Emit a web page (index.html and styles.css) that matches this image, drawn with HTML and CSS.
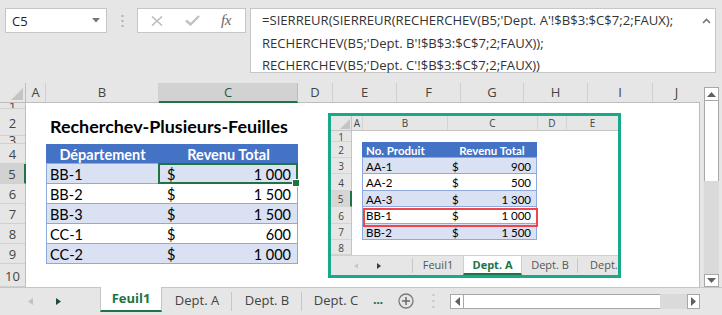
FILE: index.html
```html
<!DOCTYPE html>
<html lang="fr">
<head>
<meta charset="utf-8">
<title>Recherchev-Plusieurs-Feuilles</title>
<link rel="stylesheet" href="styles.css">
</head>
<body>
<div class="app">
  <div class="toolbar">
    <div class="namebox"><span>C5</span><svg width="8" height="5" viewBox="0 0 8 5"><path d="M0 0h8L4 4.5z" fill="#777"/></svg></div>
    <div class="vdots"><svg width="3" height="12" viewBox="0 0 3 12"><rect x="0.5" y="0" width="2" height="2" fill="#b0b0b0"/><rect x="0.5" y="5" width="2" height="2" fill="#b0b0b0"/><rect x="0.5" y="10" width="2" height="2" fill="#b0b0b0"/></svg></div>
    <div class="fxbox">
      <svg class="ic-x" width="12" height="10" viewBox="0 0 12 10"><path d="M1 0.5l10 9M11 0.5l-10 9" stroke="#bdbdbd" stroke-width="1.6"/></svg>
      <svg class="ic-ok" width="15" height="11" viewBox="0 0 15 11"><path d="M1 5.5l4.5 4L14 1" stroke="#c2c2c2" stroke-width="2.4" fill="none"/></svg>
      <span class="fx">fx</span>
    </div>
    <div class="formula">
      <div class="ftext">=SIERREUR(SIERREUR(RECHERCHEV(B5;'Dept. A'!$B$3:$C$7;2;FAUX);<br>RECHERCHEV(B5;'Dept. B'!$B$3:$C$7;2;FAUX));<br>RECHERCHEV(B5;'Dept. C'!$B$3:$C$7;2;FAUX))</div>
      <svg class="fcaret" width="9" height="6" viewBox="0 0 9 6"><path d="M1 5l3.5-3.5L8 5" stroke="#777" stroke-width="1.6" fill="none"/></svg>
    </div>
  </div>

  <div class="main">
    <div class="sheet">
      <div class="corner"><svg width="26" height="20" viewBox="0 0 26 20"><path d="M23 5v12H11z" fill="#c4c4c4"/></svg></div>
      <div class="colhdrs">
        <div class="ch">A</div><div class="ch">B</div><div class="ch sel">C</div><div class="ch">D</div><div class="ch">E</div><div class="ch">F</div><div class="ch">G</div><div class="ch">H</div><div class="ch">I</div><div class="ch last">J</div>
      </div>
      <div class="rowhdrs">
        <div class="rh">1</div><div class="rh">2</div><div class="rh">3</div><div class="rh">4</div><div class="rh sel">5</div><div class="rh">6</div><div class="rh">7</div><div class="rh">8</div><div class="rh">9</div><div class="rh">10</div>
      </div>
      <div class="cells">
        <div class="title">Recherchev-Plusieurs-Feuilles</div>
        <div class="tbl">
          <div class="th">Département</div><div class="th">Revenu Total</div>
          <div class="tb b1">BB-1</div><div class="tc b1 active"><span>$</span><span>1 000</span></div>
          <div class="tb">BB-2</div><div class="tc"><span>$</span><span>1 500</span></div>
          <div class="tb b1">BB-3</div><div class="tc b1"><span>$</span><span>1 500</span></div>
          <div class="tb">CC-1</div><div class="tc"><span>$</span><span>600</span></div>
          <div class="tb b1">CC-2</div><div class="tc b1"><span>$</span><span>1 000</span></div>
        </div>

        <div class="mini">
          <div class="mcorner"><svg width="21" height="15" viewBox="0 0 21 15"><path d="M19 3v10H9z" fill="#c4c4c4"/></svg></div>
          <div class="mcols">
            <div class="mch">A</div><div class="mch">B</div><div class="mch">C</div><div class="mch">D</div><div class="mch last">E</div>
          </div>
          <div class="mrows">
            <div class="mrh">1</div><div class="mrh">2</div><div class="mrh">3</div><div class="mrh">4</div><div class="mrh sel">5</div><div class="mrh">6</div><div class="mrh">7</div><div class="mrh">8</div>
          </div>
          <div class="mcells">
            <div class="mtbl">
              <div class="mth left">No. Produit</div><div class="mth">Revenu Total</div>
              <div class="mtb b1">AA-1</div><div class="mtc b1"><span>$</span><span>900</span></div>
              <div class="mtb">AA-2</div><div class="mtc"><span>$</span><span>500</span></div>
              <div class="mtb b1">AA-3</div><div class="mtc b1"><span>$</span><span>1 300</span></div>
              <div class="mtb">BB-1</div><div class="mtc"><span>$</span><span>1 000</span></div>
              <div class="mtb b1">BB-2</div><div class="mtc b1"><span>$</span><span>1 500</span></div>
            </div>
            <div class="redbox"></div>
          </div>
          <div class="mtabs">
            <div class="mnav"><svg width="4" height="6" viewBox="0 0 4 6"><path d="M4 0v6L0 3z" fill="#c8c8c8"/></svg><svg width="4" height="6" viewBox="0 0 4 6"><path d="M0 0v6l4-3z" fill="#3a3a3a"/></svg></div>
            <div class="mtab f1">Feuil1</div>
            <div class="mtab act">Dept. A</div>
            <div class="mtab db">Dept. B</div>
            <div class="mtab dc">Dept.</div>
          </div>
        </div>
      </div>
    </div>
    <div class="vscroll">
      <div class="sbtn up"><svg width="9" height="5" viewBox="0 0 9 5"><path d="M0 5h9L4.5 0z" fill="#606060"/></svg></div>
      <div class="vthumb"></div>
      <div class="vtrack"></div>
      <div class="sbtn down"><svg width="9" height="5" viewBox="0 0 9 5"><path d="M0 0h9L4.5 5z" fill="#606060"/></svg></div>
    </div>
  </div>

  <div class="tabbar">
    <div class="nav"><svg width="5" height="7" viewBox="0 0 5 7"><path d="M5 0v7L0 3.5z" fill="#c2c2c2"/></svg><svg width="5" height="7" viewBox="0 0 5 7"><path d="M0 0v7l5-3.5z" fill="#1f4d33"/></svg></div>
    <div class="tab active">Feuil1</div>
    <div class="tab sep">Dept. A</div>
    <div class="tab sep">Dept. B</div>
    <div class="tab dc">Dept. C</div>
    <div class="more">...</div>
    <div class="plus"><svg width="16" height="16" viewBox="0 0 16 16"><circle cx="8" cy="8" r="7" fill="none" stroke="#7a7a7a" stroke-width="1.3"/><path d="M8 4v8M4 8h8" stroke="#6a6a6a" stroke-width="1.5"/></svg></div>
    <div class="tdots"><svg width="3" height="14" viewBox="0 0 3 14"><rect x="0.5" y="0" width="2" height="2" fill="#c4c4c4"/><rect x="0.5" y="6" width="2" height="2" fill="#c4c4c4"/><rect x="0.5" y="12" width="2" height="2" fill="#c4c4c4"/></svg></div>
    <div class="hscroll">
      <div class="hbtn"><svg width="5" height="9" viewBox="0 0 5 9"><path d="M5 0v9L0 4.5z" fill="#606060"/></svg></div>
      <div class="hthumb"></div>
      <div class="htrack"></div>
      <div class="hbtn"><svg width="5" height="9" viewBox="0 0 5 9"><path d="M0 0v9l5-4.5z" fill="#606060"/></svg></div>
    </div>
  </div>
</div>
</body>
</html>
```
FILE: styles.css
```css
* { box-sizing: border-box; margin: 0; padding: 0; }
:root {
  --cols: 20px 113px 139px 35px 64px 64px 63px 64px 65px 47px;
  --rows: 6px 27px 8px repeat(6, 20px) 23px;
  --green: #217346;
  --hdr: #e6e6e6;
  --line: #c6c6c6;
}
body {
  margin: 0;
  width: 722px;
  height: 315px;
  overflow: hidden;
  background: #e6e6e6;
  font-family: "Open Sans", "Noto Sans", sans-serif;
  color: #333;
}
.app { width: 722px; height: 315px; display: flex; flex-direction: column; }

/* toolbar */
.toolbar { height: 83px; flex: none; display: flex; align-items: flex-start; padding: 8px 0 0 5px; }
.namebox {
  width: 102px; height: 25px; background: #fff; border: 1px solid var(--line);
  display: flex; align-items: center; justify-content: space-between;
  padding: 0 6px 0 6px; font-size: 13px; color: #222;
}
.vdots { width: 30px; height: 25px; display: flex; align-items: center; justify-content: center; }
.fxbox {
  width: 109px; height: 25px; background: #fff; border: 1px solid var(--line);
  display: flex; align-items: center;
}
.ic-x { margin-left: 13px; }
.ic-ok { margin-left: 22px; }
.fx { margin-left: 21px; font-family: "Liberation Serif", serif; font-style: italic; font-size: 15px; color: #666; letter-spacing: -0.5px; }
.formula {
  margin-left: 4px; width: 466px; height: 65px; background: #fff; border: 1px solid var(--line);
  position: relative; padding: 0 0 0 11px;
}
.ftext { font-size: 13.1px; line-height: 22.5px; color: #333; white-space: nowrap; }
.fcaret { position: absolute; right: 4px; top: 9px; }

/* main */
.main { height: 204px; flex: none; display: flex; }
.sheet {
  width: 700px; display: grid;
  grid-template-columns: 26px 674px; grid-template-rows: 20px 184px;
}
.corner { background: var(--hdr); box-shadow: inset -1px -1px #bdbdbd; }
.corner svg { display: block; }
.colhdrs { display: grid; grid-template-columns: var(--cols); background: var(--hdr); box-shadow: inset 0 -1px #bdbdbd; }
.ch {
  font-size: 13px; color: #444; text-align: center; line-height: 19px;
  border-right: 1px solid #d0d0d0; height: 19px;
}
.ch.last { border-right: none; }
.ch.sel { background: #d2d2d2; height: 20px; border-bottom: 2px solid var(--green); color: #1f5c3a; border-right-color: #bdbdbd; }
.rowhdrs { display: grid; grid-template-rows: var(--rows); background: var(--hdr); box-shadow: inset -1px 0 #bdbdbd; }
.rh {
  font-size: 13px; color: #444; text-align: center; overflow: hidden;
  display: flex; align-items: center; justify-content: center; padding-top: 2px;
  border-bottom: 1px solid #d0d0d0; margin-right: 1px; line-height: 1;
}
.rh.sel { background: #d2d2d2; border-right: 2px solid var(--green); margin-right: 0; }

.cells {
  display: grid; grid-template-columns: var(--cols); grid-template-rows: var(--rows);
  background: #fff; position: relative; border-right: 1px solid #bdbdbd;
}
.title {
  grid-column: 2 / 5; grid-row: 2; font-family: Lato, "Carlito", sans-serif; font-weight: 700;
  font-size: 17.9px; color: #000; padding: 4px 0 0 4px; white-space: nowrap; line-height: 26px;
}
.tbl {
  grid-column: 2 / 4; grid-row: 4 / 10;
  display: grid; grid-template-columns: 113px 139px; grid-template-rows: repeat(6, 20px);
  font-family: Lato, "Carlito", sans-serif; font-size: 14.5px; color: #000;
}
.th {
  background: #4472c4; color: #fff; font-weight: 700; text-align: center; line-height: 22px;
  border-bottom: 1px solid #8ea9db;
}
.tb { border-left: 1px solid #8ea9db; border-bottom: 1px solid #8ea9db; padding: 0 0 0 3px; line-height: 22px; }
.tc {
  border-right: 1px solid #8ea9db; border-bottom: 1px solid #8ea9db;
  display: flex; justify-content: space-between; padding: 0 6px 0 8px; line-height: 22px; position: relative;
}
.b1 { background: #d9e1f2; }
.tc.active::after {
  content: ""; position: absolute; left: -1px; top: -1px; right: -1px; bottom: -1px;
  border: 2px solid var(--green);
}
.tc.active::before {
  content: ""; position: absolute; right: -3px; bottom: -4px; width: 6px; height: 6px;
  background: var(--green); border: 1px solid #fff; z-index: 2;
}

/* embedded picture */
.mini {
  position: absolute; left: 302px; top: 10px; width: 293px; height: 165px;
  border: 3px solid #16a98a; background: #fff;
  display: grid; grid-template-columns: 21px 266px; grid-template-rows: 15px 124px 20px;
  overflow: hidden;
}
.mcorner { background: var(--hdr); box-shadow: inset -1px -1px #c4c4c4; }
.mcorner svg { display: block; }
.mcols { display: grid; grid-template-columns: 11px 85px 90px 29px 51px; background: var(--hdr); box-shadow: inset 0 -1px #c4c4c4; }
.mch { font-size: 10px; color: #444; text-align: center; line-height: 15px; border-right: 1px solid #d4d4d4; height: 14px; }
.mch.last { border-right: none; }
.mrows {
  display: grid; grid-template-rows: 11px 16px 16px 17px 16px 17px 16px 15px;
  background: var(--hdr); box-shadow: inset -1px 0 #c4c4c4;
}
.mrh {
  font-size: 10px; color: #444; display: flex; align-items: center; justify-content: center;
  overflow: hidden; border-bottom: 1px solid #d4d4d4; margin-right: 1px; padding-top: 1px; line-height: 1;
}
.mrh.sel { background: #d6d6d6; border-right: 2px solid var(--green); margin-right: 0; }
.mcells {
  display: grid; grid-template-columns: 11px 85px 90px 29px 51px;
  grid-template-rows: 11px 16px 16px 17px 16px 17px 16px 15px; position: relative;
}
.mtbl {
  grid-column: 2 / 4; grid-row: 2 / 8; display: grid;
  grid-template-columns: 85px 90px; grid-template-rows: 16px 16px 17px 16px 17px 16px;
  font-family: Lato, "Carlito", sans-serif; font-size: 11.5px; color: #000; margin-left: -1px;
}
.mth { background: #4472c4; color: #fff; font-weight: 700; text-align: center; line-height: 17px; border-bottom: 1px solid #8ea9db; }
.mth.left { text-align: left; padding-left: 4px; }
.mtb { border-left: 1px solid #8ea9db; border-bottom: 1px solid #8ea9db; padding-left: 3px; line-height: 17px; }
.mtc { border-right: 1px solid #8ea9db; border-bottom: 1px solid #8ea9db; display: flex; justify-content: space-between; padding: 0 5px 0 5px; line-height: 17px; }
.redbox {
  position: absolute; left: 11px; top: 77px; width: 175px; height: 19px;
  border: 2px solid #f0454c;
}
.mtabs {
  grid-column: 1 / 3; display: flex; background: var(--hdr); box-shadow: inset 0 1px #cfcfcf;
  font-size: 11px; color: #555;
}
.mnav { width: 82px; display: flex; align-items: center; padding-left: 23px; gap: 19px; border-right: 1px solid #c8c8c8; margin: 3px 0 2px; }
.mtab { line-height: 19px; text-align: center; }
.mtab.f1 { width: 50px; }
.mtab.act { width: 59px; background: #fff; color: var(--green); font-weight: 700; border-bottom: 2px solid var(--green); height: 19px; margin-top: 1px; line-height: 17px; border-left: 1px solid #cfcfcf; border-right: 1px solid #cfcfcf; }
.mtab.db { width: 56px; position: relative; }
.mtab.db::after { content: ""; position: absolute; right: 0; top: 3px; bottom: 2px; border-right: 1px solid #c8c8c8; }
.mtab.dc { padding-left: 12px; }

/* vertical scrollbar */
.vscroll { width: 22px; padding: 4px 3px 0 4px; display: flex; flex-direction: column; }
.sbtn { background: #fff; border: 1px solid #a8a8a8; display: flex; align-items: center; justify-content: center; }
.sbtn.up { height: 14px; }
.sbtn.down { height: 13px; }
.vthumb { height: 80px; background: #fff; border: 1px solid #a8a8a8; border-top: none; border-bottom: none; }
.vtrack { flex: 1; background: #dadada; }

/* tab bar */
.tabbar {
  height: 28px; flex: none; border-top: 1px solid #c6c6c6; display: flex; align-items: flex-start;
  font-size: 13px; color: #444;
}
.nav { width: 100px; height: 26px; display: flex; align-items: center; padding-left: 28px; gap: 23px; }
.tab { height: 24px; line-height: 24px; text-align: center; position: relative; }
.tab.active {
  width: 62px; background: #fff; color: var(--green); font-weight: 700;
  border-left: 1px solid #c6c6c6; border-right: 1px solid #c6c6c6; border-bottom: 2px solid var(--green);
  line-height: 22px; margin-top: -1px; height: 25px;
}
.tab.sep { width: 70px; }
.tab.sep::after { content: ""; position: absolute; right: 0; top: 4px; height: 19px; border-right: 1px solid #c6c6c6; }
.tab.dc { width: 68px; }
.more { width: 18px; color: var(--green); font-weight: 700; line-height: 22px; padding-left: 3px; font-size: 13px; letter-spacing: -0.5px; }
.plus { width: 32px; height: 26px; display: flex; align-items: center; justify-content: center; padding-left: 4px; }
.tdots { width: 26px; height: 26px; display: flex; align-items: center; justify-content: center; }
.hscroll { margin: 6px 0 0 4px; width: 250px; height: 15px; display: flex; }
.hbtn { width: 14px; background: #fff; border: 1px solid #a8a8a8; display: flex; align-items: center; justify-content: center; }
.hbtn:last-child { width: 13px; }
.hthumb { width: 196px; background: #fff; border: 1px solid #a8a8a8; border-left: none; border-right: none; }
.htrack { flex: 1; background: #dadada; }
```
